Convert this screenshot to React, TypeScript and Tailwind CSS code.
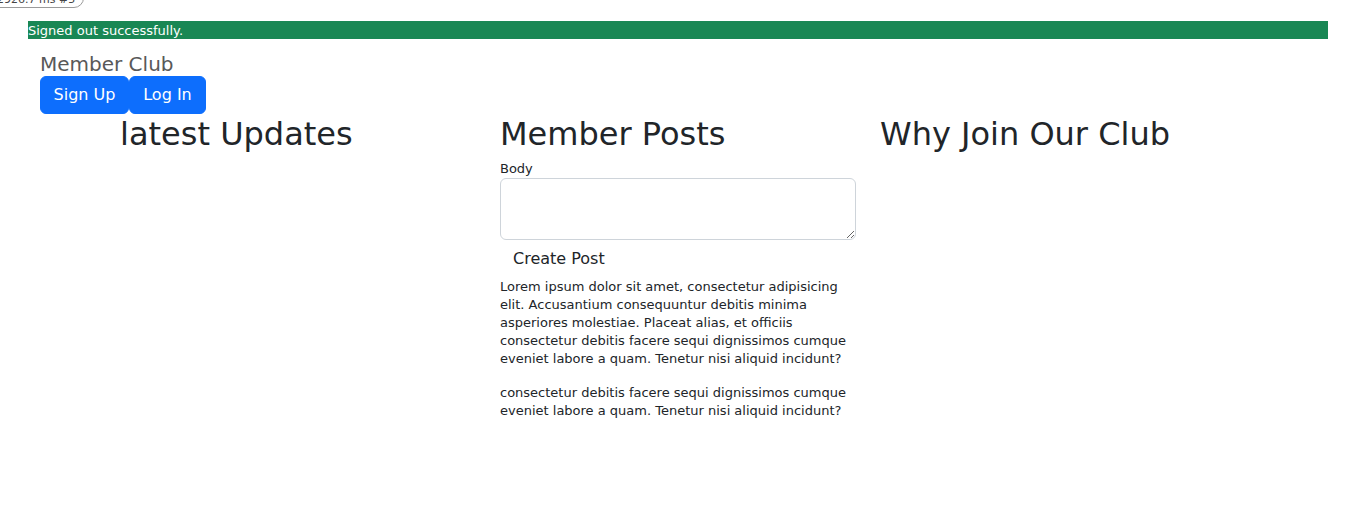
import React from "react";

const font = { fontFamily: '"DejaVu Sans", Verdana, sans-serif' };

const Column: React.FC<{ title: string; children?: React.ReactNode }> = ({
  title,
  children,
}) => (
  <div className="w-[356px]">
    <h1 className="text-[32px] leading-[38px] font-normal text-[#212529] mb-[7px]">
      {title}
    </h1>
    {children}
  </div>
);

const App: React.FC = () => {
  return (
    <div className="relative min-h-screen bg-white text-[#212529]" style={font}>
      {/* debug badge, cut off at the top */}
      <div className="absolute left-[-12px] top-[-9px] px-2 h-[17px] border border-[#9a9a9a] rounded-br-[10px] bg-white text-[11px] leading-[15px] text-[#444]">
        2926.7 ms #5
      </div>

      <div className="pt-[21px]">
        <div className="ml-[28px] w-[1300px] h-[18px] pt-px bg-[#198754] text-white text-[13px] leading-[17px]">
          Signed out successfully.
        </div>
      </div>

      <nav className="pl-[40px] pt-[14px]">
        <div className="text-[20px] leading-[23px] text-[#595959]">Member Club</div>
        <div className="flex">
          <button className="w-[89px] h-[38px] border border-[#0d6efd] bg-[#0d6efd] text-white text-base rounded-md">
            Sign Up
          </button>
          <button className="w-[77px] h-[38px] border border-[#0d6efd] bg-[#0d6efd] text-white text-base rounded-md">
            Log In
          </button>
        </div>
      </nav>

      <main className="flex gap-6 pl-[120px] pt-px">
        <Column title="latest Updates" />
        <Column title="Member Posts">
          <label className="block text-[13px] leading-[18px]">Body</label>
          <textarea className="block w-full h-[62px] border border-[#ced4da] rounded-md" />
          <button className="h-[38px] px-3 border border-transparent text-base leading-6">
            Create Post
          </button>
          <p className="text-[13px] leading-[18px] mb-4">
            Lorem ipsum dolor sit amet, consectetur adipisicing elit. Accusantium
            consequuntur debitis minima asperiores molestiae. Placeat alias, et
            officiis consectetur debitis facere sequi dignissimos cumque eveniet
            labore a quam. Tenetur nisi aliquid incidunt?
          </p>
          <p className="text-[13px] leading-[18px] mb-4">
            consectetur debitis facere sequi dignissimos cumque eveniet labore a
            quam. Tenetur nisi aliquid incidunt?
          </p>
        </Column>
        <Column title="Why Join Our Club" />
      </main>
    </div>
  );
};

export default App;
